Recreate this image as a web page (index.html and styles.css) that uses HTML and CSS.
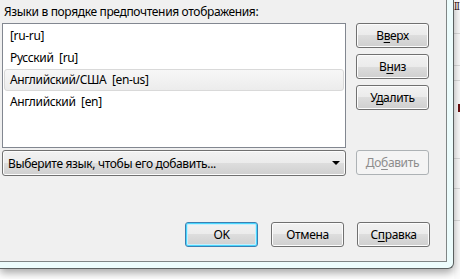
FILE: index.html
```html
<!DOCTYPE html>
<html lang="ru">
<head>
  <meta charset="UTF-8" />
  <title>Языки</title>
  <link rel="stylesheet" href="styles.css">
</head>
<body>
  <div class="bg-window">
    <div class="bg-text">II</div>
    <div class="bg-mark"></div>
  </div>

  <div class="window">
    <div class="client">
      <div class="caption">Языки в порядке предпочтения отображения:</div>

      <div class="top-row">
        <ul class="lang-list">
          <li>[ru-ru]</li>
          <li>Русский&nbsp; [ru]</li>
          <li class="selected">Английский/США&nbsp; [en-us]</li>
          <li>Английский&nbsp; [en]</li>
        </ul>
        <div class="side-buttons">
          <button class="btn">В<u>в</u>ерх</button>
          <button class="btn">В<u>н</u>из</button>
          <button class="btn">У<u>д</u>алить</button>
        </div>
      </div>

      <div class="add-row">
        <div class="combo">
          <span>Выберите язык, чтобы его добавить...</span>
          <span class="arrow"></span>
        </div>
        <button class="btn disabled">До<u>б</u>авить</button>
      </div>

      <div class="footer">
        <button class="btn default">OK</button>
        <button class="btn">Отмена</button>
        <button class="btn">С<u>п</u>равка</button>
      </div>
    </div>
  </div>
</body>
</html>
```

FILE: styles.css
```css
* { box-sizing: border-box; }

body {
  margin: 0;
  width: 460px;
  height: 279px;
  overflow: hidden;
  position: relative;
  background: #fff;
  font-family: "Noto Sans", "Open Sans", sans-serif;
  font-size: 12px;
  letter-spacing: -0.35px;
  color: #000;
}

/* window behind the dialog */
.bg-window {
  position: absolute;
  left: 454px;
  top: 0;
  width: 6px;
  height: 279px;
  background:
    linear-gradient(#dcdcdc, #dcdcdc) 0 33px / 100% 1px no-repeat,
    linear-gradient(#dcdcdc, #dcdcdc) 0 65px / 100% 1px no-repeat,
    linear-gradient(#dcdcdc, #dcdcdc) 0 80px / 100% 1px no-repeat,
    linear-gradient(#dcdcdc, #dcdcdc) 0 158px / 100% 1px no-repeat,
    linear-gradient(#dcdcdc, #dcdcdc) 0 188px / 100% 1px no-repeat,
    linear-gradient(#dcdcdc, #dcdcdc) 0 220px / 100% 1px no-repeat,
    #fbfbfb;
}
.bg-text {
  font-size: 10px;
  line-height: 12px;
  letter-spacing: -1px;
  color: #3a2020;
}
.bg-mark {
  position: absolute;
  left: 4px;
  top: 104px;
  width: 2px;
  height: 8px;
  background: #6a1010;
}

/* dialog frame */
.window {
  position: absolute;
  left: 0;
  top: 0;
  width: 454px;
  height: 269px;
  padding: 0 6px 6px 0;
  background: #ecfcfc;
  border-right: 1px solid #5a6060;
  border-bottom: 1px solid #5a6060;
  border-bottom-right-radius: 6px;
  box-shadow: 0 4px 8px rgba(0,0,0,0.35);
}

.client {
  width: 100%;
  height: 100%;
  background: #f0f0f0;
  border-right: 1px solid #7f8585;
  border-bottom: 1px solid #7f8585;
  padding: 4px 0 0 2px;
}

.caption {
  padding-left: 2px;
  height: 19px;
  line-height: 15px;
}

.top-row {
  display: flex;
  gap: 10px;
}

.lang-list {
  list-style: none;
  margin: 0;
  padding: 1px;
  width: 344px;
  height: 125px;
  background: #fff;
  border: 1px solid #828790;
}
.lang-list li {
  height: 22px;
  line-height: 21px;
  padding-left: 6px;
  white-space: pre;
}
.lang-list li.selected {
  border: 1px solid #d9d9d9;
  border-radius: 3px;
  padding-left: 5px;
  line-height: 19px;
  background: linear-gradient(#f7f7f7, #ececec);
}

.side-buttons {
  display: flex;
  flex-direction: column;
  gap: 6px;
}

.btn {
  width: 73px;
  height: 25px;
  padding: 0;
  font-family: inherit;
  font-size: 12px;
  letter-spacing: inherit;
  color: #000;
  border: 1px solid #707070;
  border-radius: 3px;
  background: linear-gradient(#f2f2f2 0%, #ebebeb 50%, #dddddd 50%, #cfcfcf 100%);
  box-shadow: inset 0 0 0 1px #fcfcfc;
}
.btn u { text-decoration-thickness: 1px; text-underline-offset: 2px; }

.btn.disabled {
  color: #8d8d8d;
  border-color: #adb2b5;
  background: #f4f4f4;
  box-shadow: none;
}

.btn.default {
  border-color: #3c7fb1;
  box-shadow: inset 0 0 0 1px #48d6fe, inset 0 0 0 2px #c8eefc;
}

.add-row {
  display: flex;
  gap: 10px;
  margin-top: 2px;
  align-items: flex-start;
}

.combo {
  width: 344px;
  height: 26px;
  border: 1px solid #707070;
  border-radius: 3px;
  background: linear-gradient(#f2f2f2 0%, #ebebeb 50%, #dddddd 50%, #cfcfcf 100%);
  box-shadow: inset 0 0 0 1px #fcfcfc;
  display: flex;
  align-items: center;
  justify-content: space-between;
  padding: 0 4px 0 5px;
}
.arrow {
  width: 0;
  height: 0;
  border-left: 4px solid transparent;
  border-right: 4px solid transparent;
  border-top: 4px solid #000;
  margin-right: 1px;
}

.footer {
  display: flex;
  gap: 13px;
  margin-top: 46px;
  padding-left: 183px;
}
```
